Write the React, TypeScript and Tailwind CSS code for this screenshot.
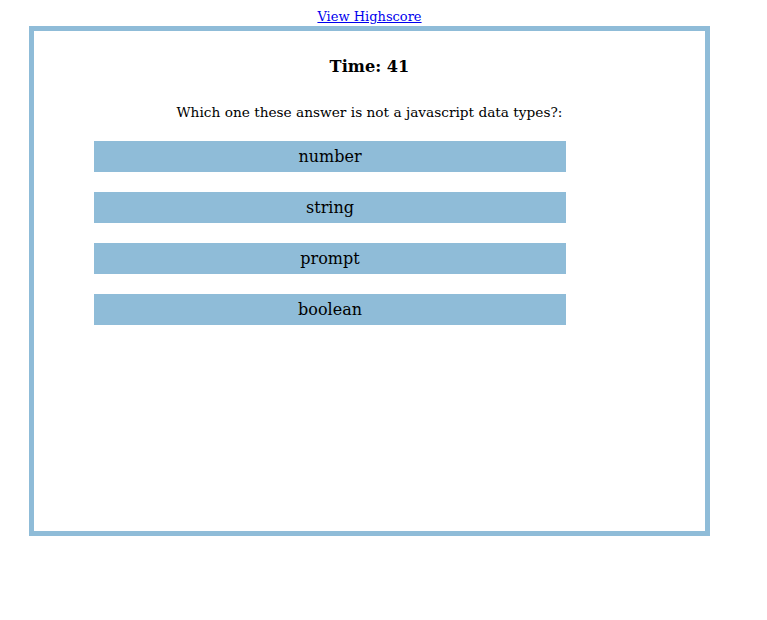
const answers = ["number", "string", "prompt", "boolean"];

export default function App() {
  return (
    <div className="min-h-[620px] bg-white font-['DejaVu_Serif',serif] text-black">
      <div className="ml-[29px] w-[681px]">
        <div className="flex h-[26px] items-center justify-center pt-[7px]">
          <a href="#" className="text-[13px] leading-[18px] text-[#0000ee] underline">
            View Highscore
          </a>
        </div>
        <div className="h-[510px] border-[5px] border-[#8fbcd8] pt-[25px]">
          <h2 className="text-center text-[16.2px] font-bold leading-[22px]">Time: 41</h2>
          <p className="mt-[24px] text-center text-[13.7px] leading-[20px]">
            Which one these answer is not a javascript data types?:
          </p>
          <div className="ml-[60px] mt-[19px] flex w-[472px] flex-col gap-[20px]">
            {answers.map((a) => (
              <button
                key={a}
                className="h-[31px] w-full bg-[#8fbcd8] text-center text-[16px] leading-[31px] text-black"
              >
                {a}
              </button>
            ))}
          </div>
        </div>
      </div>
    </div>
  );
}
